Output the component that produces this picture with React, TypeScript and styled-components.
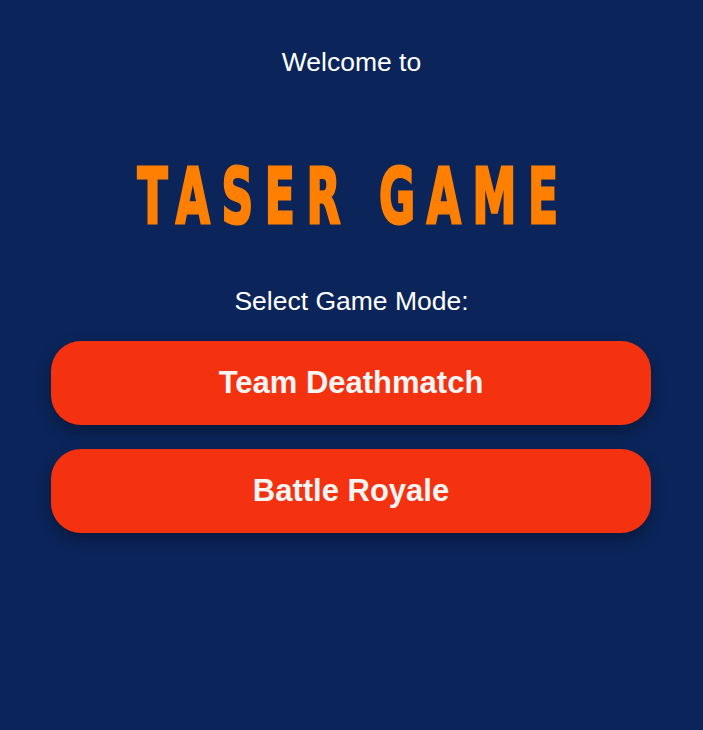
import styled, { createGlobalStyle } from "styled-components";

const GlobalStyle = createGlobalStyle`
  html, body {
    margin: 0;
    padding: 0;
    background: #0b255a;
  }
  body {
    font-family: "Liberation Sans", Arial, sans-serif;
  }
`;

const Screen = styled.div`
  width: 703px;
  min-height: 730px;
  background: #0b255a;
  display: flex;
  flex-direction: column;
  align-items: center;
  padding-top: 46px;
  box-sizing: border-box;
`;

const Welcome = styled.p`
  margin: 0;
  color: #ffffff;
  font-size: 26.5px;
  line-height: 32px;
`;

/* Impact-like heavy condensed caps, squeezed from DejaVu Bold */
const Title = styled.h1`
  margin: 74px -4px 0 0;
  display: inline-block;
  color: #ff8000;
  font-family: "DejaVu Sans", sans-serif;
  font-weight: 700;
  font-size: 76px;
  line-height: 90px;
  letter-spacing: 20px;
  -webkit-text-stroke: 3px #ff8000;
  transform: scaleX(0.58);
  white-space: nowrap;
`;

const ModeLabel = styled.p`
  margin: 43px 0 0;
  color: #ffffff;
  font-size: 26.5px;
  line-height: 32px;
`;

const ModeList = styled.div`
  margin-top: 24px;
  display: flex;
  flex-direction: column;
  gap: 24px;
  width: 600px;
  margin-right: 1px;
`;

const ModeButton = styled.button`
  height: 84px;
  border: none;
  border-radius: 30px;
  background: #f4320f;
  color: #f5f5f5;
  font-family: "Liberation Sans", Arial, sans-serif;
  font-weight: 700;
  font-size: 31px;
  box-shadow: 0 6px 14px rgba(0, 0, 0, 0.35);
  cursor: pointer;
`;

export default function App() {
  return (
    <>
      <GlobalStyle />
      <Screen>
        <Welcome>Welcome to</Welcome>
        <Title>TASER GAME</Title>
        <ModeLabel>Select Game Mode:</ModeLabel>
        <ModeList>
          <ModeButton>Team Deathmatch</ModeButton>
          <ModeButton>Battle Royale</ModeButton>
        </ModeList>
      </Screen>
    </>
  );
}
